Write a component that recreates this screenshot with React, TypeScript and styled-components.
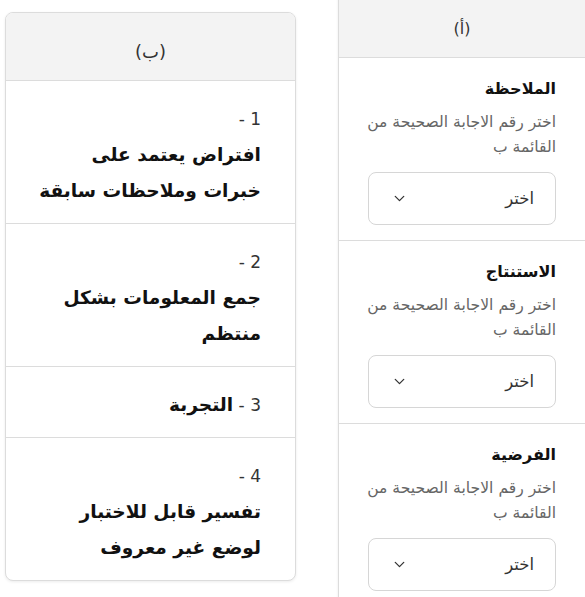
import styled, { createGlobalStyle } from 'styled-components'
import { ReactElement } from 'react'
import { ChevronDown } from 'lucide-react'

const GlobalStyle = createGlobalStyle`
  html, body {
    margin: 0;
    padding: 0;
    background: #ffffff;
    overflow: hidden;
  }
  body {
    font-family: "DejaVu Sans", "Noto Sans", sans-serif;
    color: #222;
  }
`

const Page = styled.div`
  display: flex;
  align-items: flex-start;
  gap: 42px;
  padding: 12px 0 0 5px;
  width: 585px;
  height: 597px;
  box-sizing: border-box;
`

const Card = styled.div<{ $width: number; $shift?: number }>`
  direction: rtl;
  width: ${(p) => p.$width}px;
  flex-shrink: 0;
  margin-top: ${(p) => p.$shift ?? 0}px;
  border: 1px solid #dcdcdc;
  border-radius: 8px;
  background: #fff;
  box-shadow: 0 1px 3px rgba(0, 0, 0, 0.08);
  overflow: hidden;
  box-sizing: border-box;
`

const Header = styled.div<{ $size: number }>`
  height: 68px;
  display: flex;
  align-items: center;
  justify-content: center;
  padding-top: 9px;
  background: #f3f3f3;
  border-bottom: 1px solid #dcdcdc;
  font-size: ${(p) => p.$size}px;
  color: #333;
  box-sizing: border-box;
`

const Answer = styled.div<{ $last?: boolean }>`
  padding: 20px 34px 14px 10px;
  border-bottom: ${(p) => (p.$last ? 'none' : '1px solid #dcdcdc')};
  line-height: 36px;
`

const Num = styled.div`
  font-size: 17px;
  color: #333;
`

const AnswerText = styled.div`
  font-size: 18.6px;
  font-weight: bold;
  color: #111;
  white-space: nowrap;
`

const InlineNum = styled.span`
  font-weight: normal;
  color: #333;
  font-size: 17px;
`

const Question = styled.div<{ $last?: boolean }>`
  padding: 17px 29px 15px 29px;
  border-bottom: ${(p) => (p.$last ? 'none' : '1px solid #dcdcdc')};
`

const Title = styled.div`
  font-size: 16px;
  font-weight: bold;
  line-height: 28px;
  color: #111;
  margin-bottom: 7px;
`

const Hint = styled.div`
  font-size: 15.6px;
  line-height: 25px;
  color: #666;
  white-space: nowrap;
`

const Select = styled.div`
  margin-top: 12px;
  height: 53px;
  border: 1px solid #d6d6d6;
  border-radius: 8px;
  display: flex;
  align-items: center;
  justify-content: space-between;
  padding: 0 21px 0 22px;
  box-sizing: border-box;
  font-size: 16.5px;
  color: #333;
`

const answers = [
  { n: '1 -', lines: ['افتراض يعتمد على', 'خبرات وملاحظات سابقة'] },
  { n: '2 -', lines: ['جمع المعلومات بشكل', 'منتظم'] },
  { n: '3 -', lines: [] as string[], inline: 'التجربة' },
  { n: '4 -', lines: ['تفسير قابل للاختبار', 'لوضع غير معروف'] },
]

const questions = ['الملاحظة', 'الاستنتاج', 'الفرضية']

const App = (): ReactElement => {
  return (
    <>
      <GlobalStyle />
      <Page>
        <Card $width={291}>
          <Header $size={18}>(ب)</Header>
          {answers.map((a, i) => (
            <Answer key={a.n} $last={i === answers.length - 1}>
              {a.inline ? (
                <AnswerText>
                  <InlineNum>{a.n.replace(' -', '')} - </InlineNum>
                  {a.inline}
                </AnswerText>
              ) : (
                <>
                  <Num>{a.n}</Num>
                  {a.lines.map((l) => (
                    <AnswerText key={l}>{l}</AnswerText>
                  ))}
                </>
              )}
            </Answer>
          ))}
        </Card>
        <Card $width={248} $shift={-23}>
          <Header $size={16}>(أ)</Header>
          {questions.map((q, i) => (
            <Question key={q} $last={i === questions.length - 1}>
              <Title>{q}</Title>
              <Hint>
                اختر رقم الاجابة الصحيحة من
                <br />
                القائمة ب
              </Hint>
              <Select>
                <span>اختر</span>
                <ChevronDown size={17} strokeWidth={1.8} color="#333" />
              </Select>
            </Question>
          ))}
        </Card>
      </Page>
    </>
  )
}

export default App
